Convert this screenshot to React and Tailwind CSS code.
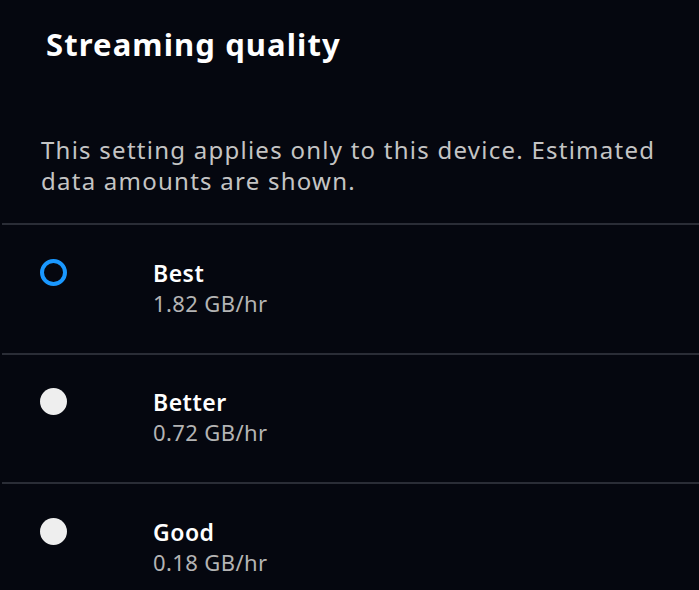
const options = [
  { label: 'Best', rate: '1.82 GB/hr', selected: true },
  { label: 'Better', rate: '0.72 GB/hr', selected: false },
  { label: 'Good', rate: '0.18 GB/hr', selected: false },
];

function Radio({ selected }) {
  if (selected) {
    return <div className="h-[27px] w-[27px] rounded-full border-[4px] border-[#1a98ff]" />;
  }
  return <div className="h-[27px] w-[27px] rounded-full bg-[#eeeeee]" />;
}

export default function App() {
  return (
    <div
      className="h-[590px] w-full overflow-hidden bg-[#05070f]"
      style={{ fontFamily: '"Noto Sans", "Open Sans", sans-serif' }}
    >
      <h1 className="pl-[46px] pt-[26px] text-[31px] font-bold leading-[36px] tracking-[1.1px] text-white">
        Streaming quality
      </h1>
      <p className="mt-[72px] pl-[41px] pr-[20px] text-[24px] leading-[31px] tracking-[1.25px] text-[#c4c4c4]">
        This setting applies only to this device. Estimated data amounts are shown.
      </p>
      <div className="mt-[27px]">
        {options.map((o) => (
          <div key={o.label}>
            <div className="ml-[2px] h-[2px] bg-[#2a2d36]" />
            <div className="flex h-[127.5px] items-center">
              <div className="flex items-start">
                <div className="w-[153px] pl-[40px] -mt-[1px]">
                  <Radio selected={o.selected} />
                </div>
                <div className="-mt-[2px]">
                  <div className="text-[23px] font-semibold leading-[30px] tracking-[0.5px] text-white">{o.label}</div>
                  <div className="text-[22px] leading-[30px] tracking-[0.4px] text-[#b4b4b4]">{o.rate}</div>
                </div>
              </div>
            </div>
          </div>
        ))}
      </div>
    </div>
  );
}
